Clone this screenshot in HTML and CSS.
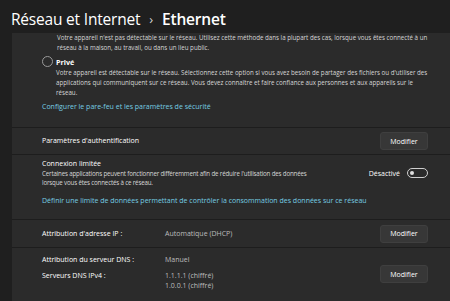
FILE: index.html
```html
<!DOCTYPE html>
<html lang="fr">
<head>
    <meta charset="UTF-8">
    <meta name="viewport" content="width=device-width, initial-scale=1.0">
    <title>Ethernet</title>
    <link rel="stylesheet" href="styles.css">
</head>
<body>
<h1 class="crumb">
    <span class="crumb-parent">Réseau et Internet</span>
    <span class="crumb-sep">›</span>
    <span class="crumb-current">Ethernet</span>
</h1>

<div class="panel">
    <div class="section profile">
        <p class="desc indent">Votre appareil n'est pas détectable sur le réseau. Utilisez cette méthode dans la plupart des cas, lorsque vous êtes connecté à un réseau à la maison, au travail, ou dans un lieu public.</p>

        <div class="radio-row">
            <span class="radio"></span>
            <div>
                <div class="radio-label">Privé</div>
                <p class="desc">Votre appareil est détectable sur le réseau. Sélectionnez cette option si vous avez besoin de partager des fichiers ou d'utiliser des applications qui communiquent sur ce réseau. Vous devez connaître et faire confiance aux personnes et aux appareils sur le réseau.</p>
            </div>
        </div>

        <a class="link" href="#">Configurer le pare-feu et les paramètres de sécurité</a>
    </div>

    <div class="section row auth">
        <span class="label">Paramètres d'authentification</span>
        <button class="btn">Modifier</button>
    </div>

    <div class="section metered">
        <div class="row">
            <div>
                <div class="label">Connexion limitée</div>
                <p class="desc">Certaines applications peuvent fonctionner différemment afin de réduire l'utilisation des données<br>lorsque vous êtes connectés à ce réseau.</p>
            </div>
            <div class="toggle-wrap">
                <span class="toggle-text">Désactivé</span>
                <span class="toggle"></span>
            </div>
        </div>
        <a class="link" href="#">Définir une limite de données permettant de contrôler la consommation des données sur ce réseau</a>
    </div>

    <div class="section row ip">
        <div class="props">
            <span class="label">Attribution d'adresse IP :</span>
            <span class="value">Automatique (DHCP)</span>
        </div>
        <button class="btn">Modifier</button>
    </div>

    <div class="section dns">
        <div class="props">
            <span class="label">Attribution du serveur DNS :</span>
            <span class="value">Manuel</span>
            <span class="label">Serveurs DNS IPv4 :</span>
            <span class="value">1.1.1.1 (chiffré)<br>1.0.0.1 (chiffré)</span>
        </div>
        <button class="btn">Modifier</button>
    </div>
</div>
</body>
</html>
```

FILE: styles.css
```css
* {
    box-sizing: border-box;
}

html {
    height: 100%;
}

body {
    margin: 0;
    height: 100%;
    overflow: hidden;
    background-color: #1f1f1f;
    color: #ffffff;
    font-family: "Open Sans", "Noto Sans", sans-serif;
}

.crumb {
    margin: 0;
    height: 33px;
    padding: 5px 0 0 11px;
    display: flex;
    align-items: center;
    gap: 9px;
    font-size: 15.5px;
    font-weight: 400;
    letter-spacing: -0.2px;
}

.crumb-sep {
    font-size: 13px;
    color: #cfcfcf;
}

.crumb-current {
    font-weight: 600;
}

.panel {
    margin-left: 12px;
    background-color: #1d1d1d;
    display: flex;
    flex-direction: column;
    gap: 1px;
}

.section {
    background-color: #2b2b2b;
    padding: 0 22px 0 30px;
}

.desc {
    margin: 0;
    font-size: 6.2px;
    line-height: 10px;
    color: #d6d6d6;
}

.indent {
    padding-left: 15px;
}

.profile {
    height: 94px;
}

.radio-row {
    display: flex;
    gap: 3px;
    margin-top: 3px;
}

.radio {
    width: 11px;
    height: 11px;
    border: 1px solid #9a9a9a;
    border-radius: 50%;
    flex-shrink: 0;
}

.radio-label {
    font-size: 7.2px;
    font-weight: 700;
    line-height: 12px;
}

.link {
    display: block;
    margin-top: 4px;
    font-size: 7px;
    line-height: 10px;
    color: #76cde3;
    text-decoration: none;
}

.row {
    display: flex;
    align-items: center;
    justify-content: space-between;
}

.label {
    font-size: 7px;
    line-height: 10px;
    color: #ffffff;
}

.btn {
    width: 48px;
    height: 18px;
    padding: 0;
    background-color: #373737;
    border: 1px solid #3f3f3f;
    border-radius: 3px;
    color: #ffffff;
    font-family: inherit;
    font-size: 7px;
}

.auth {
    height: 26px;
}

.metered {
    padding-top: 4px;
    height: 64px;
}

.metered .row {
    align-items: flex-start;
}

.metered .desc {
    letter-spacing: -0.17px;
    line-height: 9px;
}

.toggle-wrap {
    display: flex;
    align-items: center;
    gap: 7px;
    margin-top: 9px;
}

.toggle-text {
    font-size: 7px;
}

.toggle {
    position: relative;
    width: 21px;
    height: 10px;
    border: 1px solid #cfcfcf;
    border-radius: 6px;
}

.toggle::after {
    content: "";
    position: absolute;
    left: 2px;
    top: 2px;
    width: 4px;
    height: 4px;
    border-radius: 50%;
    background-color: #e0e0e0;
}

.metered .link {
    margin-top: 9px;
}

.ip {
    height: 27px;
}

.props {
    display: grid;
    grid-template-columns: 123px auto;
    row-gap: 6px;
}

.value {
    font-size: 7px;
    line-height: 10px;
    color: #bdbdbd;
}

.dns {
    display: flex;
    justify-content: space-between;
    align-items: flex-start;
    padding-top: 7px;
    height: 60px;
}

.dns .btn {
    margin-top: 10px;
}
```
